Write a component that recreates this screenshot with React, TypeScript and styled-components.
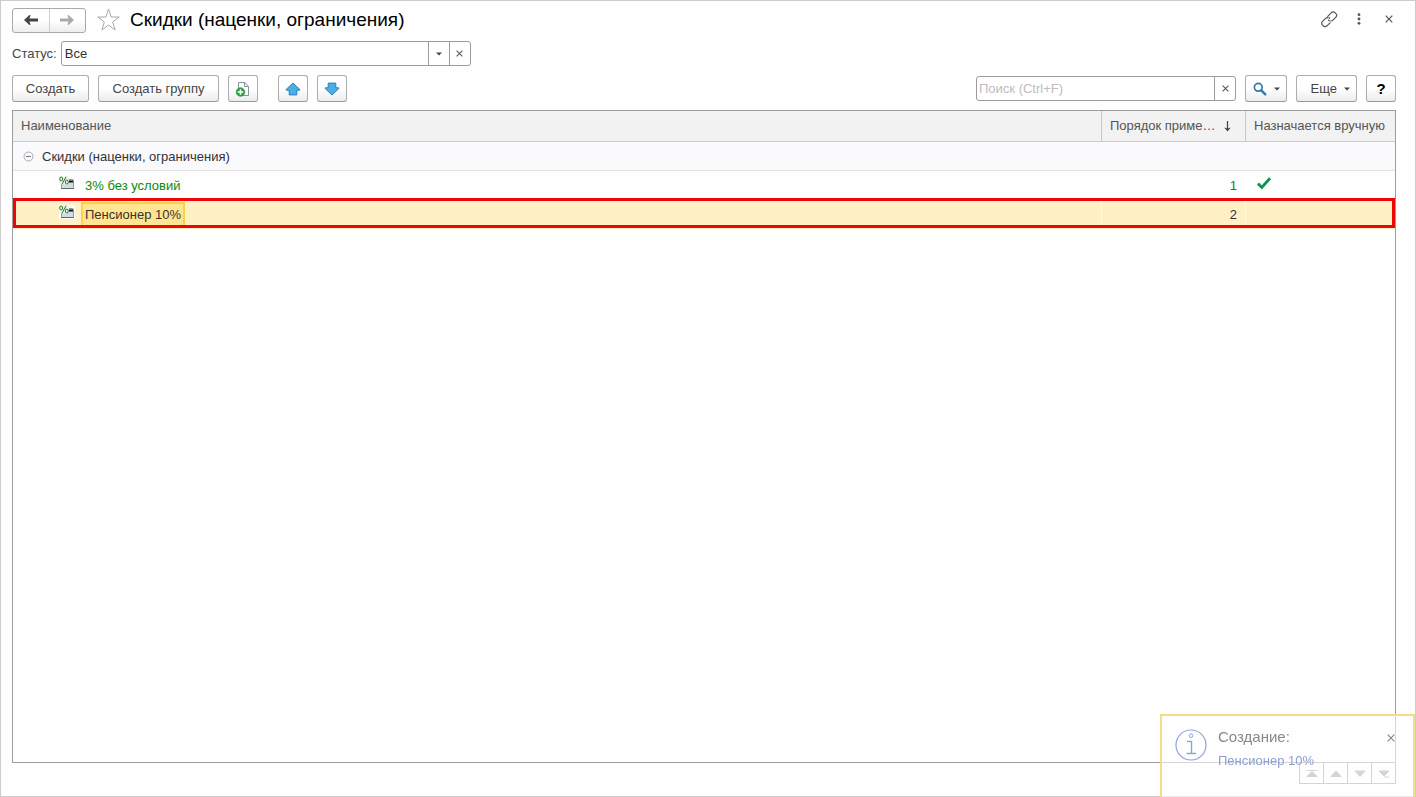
import React from 'react';
import styled, { createGlobalStyle, css } from 'styled-components';

const GlobalStyle = createGlobalStyle`
  *, *::before, *::after { box-sizing: border-box; }
  body {
    margin: 0;
    background: #fefefe;
    color: #444;
    font-family: "Liberation Sans", Arial, sans-serif;
    font-size: 13px;
    line-height: 16px;
  }
  button, input { font: inherit; color: inherit; margin: 0; }
  svg { display: block; flex: none; }
`;

const Window = styled.main`
  min-height: 100vh;
  display: flex;
  flex-direction: column;
  padding: 6px 19px 12px 11px;
  border: 1px solid #cdcdcd;
`;

const TitleBar = styled.header`
  display: flex;
  align-items: center;
  height: 26px;
`;

const History = styled.nav`
  display: flex;
  width: 74px;
  height: 25px;
  border: 1px solid #a9a9a9;
  border-radius: 3px;
  background: linear-gradient(#fff 50%, #ededed);
`;

const PlainButton = styled.button`
  display: flex;
  align-items: center;
  justify-content: center;
  padding: 0;
  border: 0;
  background: none;
`;

const HistoryButton = styled(PlainButton)`
  flex: 1;
  & + & { border-left: 1px solid #cfcfcf; }
`;

const StarButton = styled(PlainButton)`
  width: 24px;
  margin: 0 10px;
`;

const Title = styled.h1`
  flex: 1;
  margin: 0;
  color: #000;
  font-size: 19px;
  font-weight: 400;
  line-height: 24px;
`;

const WindowButtons = styled.div`
  display: flex;
  align-self: flex-start;
  gap: 12px;
  margin-right: -2px;
`;

const WindowButton = styled(PlainButton)`
  width: 18px;
  height: 24px;
`;

const Filter = styled.div`
  display: flex;
  align-items: center;
  gap: 4px;
  margin-top: 8px;
`;

const Field = styled.div<{ $width: number }>`
  display: flex;
  width: ${({ $width }) => $width}px;
  height: 25px;
  border: 1px solid #9c9c9c;
  border-radius: 3px;
  background: #fff;
`;

const FieldInput = styled.input`
  flex: 1;
  min-width: 0;
  padding: 0 3px;
  border: 0;
  outline: 0;
  background: none;
  color: #333;
  &::placeholder { color: #bdbdbd; opacity: 1; }
`;

const SearchInput = styled(FieldInput)`
  padding: 0 2px;
`;

const FieldButton = styled(PlainButton)`
  width: 21px;
  border-left: 1px solid #9c9c9c;
`;

const Toolbar = styled.div`
  display: flex;
  align-items: center;
  gap: 9px;
  margin-top: 9px;
`;

const ToolGroup = styled.div<{ $push?: boolean }>`
  display: flex;
  align-items: center;
  gap: 9px;
  ${({ $push }) => $push ? css`margin-left: auto;` : css`margin-right: 11px;`}
`;

const Button = styled.button<{ $width: number }>`
  display: flex;
  align-items: center;
  justify-content: center;
  gap: 7px;
  width: ${({ $width }) => $width}px;
  height: 27px;
  padding: 0;
  border: 1px solid #adadad;
  border-bottom-color: #999;
  border-radius: 3px;
  background: linear-gradient(#fff 50%, #ececec);
  color: #444;
  white-space: nowrap;
`;

const MoreButton = styled(Button)`
  justify-content: flex-end;
  padding-right: 6px;
`;

const HelpButton = styled(Button)`
  color: #000;
  font-size: 15px;
  font-weight: 700;
`;

const List = styled.section`
  flex: 1;
  margin-top: 8px;
  border: 1px solid #9c9c9c;
`;

const Table = styled.table`
  width: 100%;
  border-collapse: separate;
  border-spacing: 0;
  table-layout: fixed;
`;

const HeadCell = styled.th<{ $width?: number }>`
  ${({ $width }) => $width && css`width: ${$width}px;`}
  height: 31px;
  padding: 0 8px;
  border-bottom: 1px solid #c9c9c9;
  background: #f2f2f2;
  color: #555;
  font-weight: 400;
  text-align: left;
  white-space: nowrap;
  & + & { border-left: 1px solid #c9c9c9; }
`;

const SortLabel = styled.span`
  display: flex;
  align-items: center;
  justify-content: space-between;
  padding-right: 5px;
`;

const Row = styled.tr<{ $kind: 'group' | 'item' | 'current' }>`
  color: ${({ $kind }) => ($kind === 'item' ? '#0a8a0a' : '#333')};
  ${({ $kind }) => $kind === 'group' && css`
    background: #faf9fb;
    td { border-bottom: 1px solid #e2e2e2; }
  `}
  ${({ $kind }) => $kind === 'current' && css`
    position: relative;
    background: #fff0c6;
    td + td { border-left: 1px solid #fff8e4; }
    td:first-child::after {
      content: '';
      position: absolute;
      inset: -2px 0 1px;
      border: 3px solid #ec0606;
    }
  `}
`;

const Cell = styled.td<{ $align?: 'right' }>`
  height: 29px;
  padding: 0 8px;
  text-align: ${({ $align }) => $align ?? 'left'};
`;

const GroupName = styled.div`
  display: flex;
  align-items: center;
  gap: 8px;
  padding: 1px 0 0 2px;
`;

const ItemName = styled.div`
  display: flex;
  align-items: center;
  gap: 6px;
  padding-left: 38px;
`;

const RaisedIcon = styled.span`
  display: flex;
  padding-bottom: 5px;
`;

const CheckMark = styled(RaisedIcon)`
  padding-left: 4px;
`;

const NameText = styled.span<{ $active?: boolean }>`
  padding: 3px 2px;
  border: 2px solid transparent;
  ${({ $active }) => $active && css`
    border-color: #fbd34a;
    background: #ffe591;
  `}
`;

const Pager = styled.div`
  display: flex;
  align-self: flex-end;
  height: 21px;
  border: 1px solid #999;
  border-top: 0;
`;

const PagerButton = styled(PlainButton)`
  width: 24px;
  &:first-child { width: 23px; }
  & + & { border-left: 1px solid #999; }
`;

const Toast = styled.aside`
  position: fixed;
  right: 1px;
  bottom: 0;
  display: flex;
  align-items: flex-start;
  gap: 11px;
  width: 255px;
  height: 83px;
  padding: 13px 18px 0 13px;
  border: 2px solid #f6de7c;
  border-bottom: 0;
  background: rgba(254, 254, 254, 0.6);
`;

const ToastBody = styled.div`
  flex: 1;
  display: flex;
  flex-direction: column;
  gap: 8px;
`;

const ToastTitle = styled.strong`
  color: #888;
  font-size: 15px;
  font-weight: 400;
`;

const ToastLink = styled.a`
  color: #8a9fd4;
  text-decoration: none;
`;

const ToastClose = styled(PlainButton)`
  width: 9px;
  height: 18px;
`;

const Cross = ({ size = 7, color = '#555' }: { size?: number; color?: string }) => (
  <svg width={size} height={size} viewBox="0 0 8 8" fill="none" stroke={color} strokeWidth="1.2">
    <path d="M.7.7l6.6 6.6M7.3.7L.7 7.3" />
  </svg>
);

const Caret = () => (
  <svg width="6" height="4" viewBox="0 0 6 4" fill="#444"><path d="M0 .5h6L3 3.5z" /></svg>
);

const ArrowIcon = ({ forward }: { forward?: boolean }) => (
  <svg width="16" height="12" viewBox="0 0 16 12" fill={forward ? '#aaa' : '#444'}>
    <path
      transform={forward ? 'translate(16 0) scale(-1 1)' : undefined}
      d="M1 6L6.4 1 7.6 1.4 6.4 4.5H15v3H6.4l1.2 3.1-1.2.4z"
    />
  </svg>
);

const StarIcon = () => (
  <svg width="24" height="24" viewBox="0 0 24 24" fill="#fff" stroke="#aaa" strokeWidth="1">
    <path d="M12.5 1l2.6 8h8.1l-6.5 4.9 2.4 8-6.6-4.9-6.6 4.9 2.4-8L1.8 9h8.1z" />
  </svg>
);

const LinkIcon = () => (
  <svg width="17" height="17" viewBox="0 0 17 17" fill="none" stroke="#555" strokeWidth="1.2" strokeLinecap="round">
    <path d="M6.8 5.4l3.4-3.5a2.9 2.9 0 0 1 4.1 0l.4.4a2.9 2.9 0 0 1 0 4.1l-2.8 2.8a2.9 2.9 0 0 1-2.2.8" />
    <path d="M9 11.8l-2.8 2.9a2.9 2.9 0 0 1-4.1 0l-.4-.4a2.9 2.9 0 0 1 0-4.1l2.8-2.8a2.9 2.9 0 0 1 2.2-.8" />
    <path d="M7.9 6.6a2.9 2.9 0 0 1 .8.7M8.2 9.8a2.9 2.9 0 0 1-.8-.7" />
  </svg>
);

const DotsIcon = () => (
  <svg width="4" height="12" viewBox="0 0 4 12" fill="#555">
    <circle cx="2" cy="1.7" r="1.4" /><circle cx="2" cy="6" r="1.4" /><circle cx="2" cy="10.3" r="1.4" />
  </svg>
);

const AddDocumentIcon = () => (
  <svg width="16" height="16" viewBox="0 0 16 16">
    <path d="M3.5 1.5h6.3l3.7 3.7v9.3h-10z" fill="#fff" stroke="#8a949c" />
    <path d="M9.5 1.5v4h4" fill="none" stroke="#8a949c" />
    <circle cx="5.5" cy="11" r="4.3" fill="#27a844" stroke="#178a32" strokeWidth=".6" />
    <path d="M5.5 8.3v5.4M2.8 11h5.4" stroke="#fff" strokeWidth="1.5" />
  </svg>
);

const MoveIcon = ({ down }: { down?: boolean }) => (
  <svg width="16" height="14" viewBox="0 0 16 14" fill="#4aaee8" stroke="#2b7fb8" strokeLinejoin="round">
    <path
      transform={down ? 'translate(0 14) scale(1 -1)' : undefined}
      d="M8 1l6.8 6.4v.8H11.8V12.9H4.2V8.2h-3v-.8z"
    />
  </svg>
);

const SearchIcon = () => (
  <svg width="14" height="14" viewBox="0 0 14 14" fill="none" stroke="#3279ab">
    <circle cx="5.3" cy="5.3" r="3.9" strokeWidth="1.7" />
    <path d="M8.3 8.3l4 4" strokeWidth="2.4" strokeLinecap="round" />
  </svg>
);

const SortIcon = () => (
  <svg width="9" height="11" viewBox="0 0 9 11">
    <path d="M4.5 0v8" stroke="#444" strokeWidth="1.3" />
    <path d="M1.2 6.5l3.3 1 3.3-1L4.5 10.5z" fill="#444" />
  </svg>
);

const CollapseIcon = () => (
  <svg width="11" height="11" viewBox="0 0 11 11" fill="none" stroke="#aaa">
    <circle cx="5.5" cy="5.5" r="4.5" /><path d="M3 5.5h5" stroke="#777" />
  </svg>
);

const DiscountIcon = () => (
  <svg width="16" height="14" viewBox="0 0 16 14">
    <rect width="16" height="14" fill="#fdfdfa" />
    <rect x="2.5" y="3.5" width="12" height="9" rx="1" fill="#d3dce1" stroke="#8b979e" />
    <path d="M2 12.5h13" stroke="#5d6970" />
    <path d="M10 5.5h4" stroke="#111" strokeWidth="2" />
    <path d="M0 0h10v5.5L8.5 8.5H0z" fill="#f1f7ef" />
    <path d="M7 .8L3 8.4" stroke="#287332" strokeWidth="1" />
    <ellipse cx="2.2" cy="3" rx="1.5" ry="2" fill="none" stroke="#287332" />
    <ellipse cx="7.8" cy="6" rx="1.5" ry="2" fill="none" stroke="#287332" />
  </svg>
);

const CheckIcon = () => (
  <svg width="14" height="13" viewBox="0 0 14 13" fill="none" stroke="#0c9455" strokeWidth="2.8">
    <path d="M1 6.5l3.8 4L13 1.2" />
  </svg>
);

const InfoIcon = () => (
  <svg width="32" height="32" viewBox="0 0 32 32" fill="none" stroke="#8fa5d6" strokeWidth="1.2">
    <circle cx="16" cy="16" r="15" />
    <circle cx="16" cy="6.7" r="1.8" strokeWidth="1" />
    <path d="M12 12.5h4.5v12M11.5 24.5h9.5" strokeWidth="1.4" />
  </svg>
);

const pagerShapes = [
  { label: 'В начало', path: 'M1 1.5h10M6 2.5l5 5H1z' },
  { label: 'Вверх', path: 'M6 2l5 5.5H1z' },
  { label: 'Вниз', path: 'M6 7.5L1 2h10z' },
  { label: 'В конец', path: 'M6 7L1 2h10zM6 8h5' },
];

export default function App() {
  return (
    <Window>
      <GlobalStyle />
      <TitleBar>
        <History aria-label="История">
          <HistoryButton aria-label="Назад"><ArrowIcon /></HistoryButton>
          <HistoryButton aria-label="Вперед"><ArrowIcon forward /></HistoryButton>
        </History>
        <StarButton aria-label="В избранное"><StarIcon /></StarButton>
        <Title>Скидки (наценки, ограничения)</Title>
        <WindowButtons>
          <WindowButton aria-label="Ссылка"><LinkIcon /></WindowButton>
          <WindowButton aria-label="Меню"><DotsIcon /></WindowButton>
          <WindowButton aria-label="Закрыть"><Cross size={8} /></WindowButton>
        </WindowButtons>
      </TitleBar>

      <Filter>
        <label htmlFor="status">Статус:</label>
        <Field $width={410}>
          <FieldInput id="status" defaultValue="Все" />
          <FieldButton aria-label="Выбрать"><Caret /></FieldButton>
          <FieldButton aria-label="Очистить статус"><Cross /></FieldButton>
        </Field>
      </Filter>

      <Toolbar>
        <ToolGroup>
          <Button $width={77}>Создать</Button>
          <Button $width={121}>Создать группу</Button>
          <Button $width={30} aria-label="Скопировать"><AddDocumentIcon /></Button>
        </ToolGroup>
        <Button $width={30} aria-label="Переместить вверх"><MoveIcon /></Button>
        <Button $width={30} aria-label="Переместить вниз"><MoveIcon down /></Button>
        <ToolGroup $push>
          <Field $width={260}>
            <SearchInput aria-label="Поиск" placeholder="Поиск (Ctrl+F)" />
            <FieldButton aria-label="Очистить поиск"><Cross /></FieldButton>
          </Field>
          <Button $width={42} aria-label="Найти"><SearchIcon /><Caret /></Button>
          <MoreButton $width={61}>Еще<Caret /></MoreButton>
          <HelpButton $width={30}>?</HelpButton>
        </ToolGroup>
      </Toolbar>

      <List>
        <Table>
          <thead>
            <tr>
              <HeadCell>Наименование</HeadCell>
              <HeadCell $width={144}><SortLabel>Порядок приме…<SortIcon /></SortLabel></HeadCell>
              <HeadCell $width={150}>Назначается вручную</HeadCell>
            </tr>
          </thead>
          <tbody>
            <Row $kind="group">
              <Cell colSpan={3}><GroupName><CollapseIcon />Скидки (наценки, ограничения)</GroupName></Cell>
            </Row>
            <Row $kind="item">
              <Cell><ItemName><RaisedIcon><DiscountIcon /></RaisedIcon><NameText>3% без условий</NameText></ItemName></Cell>
              <Cell $align="right">1</Cell>
              <Cell><CheckMark><CheckIcon /></CheckMark></Cell>
            </Row>
            <Row $kind="current">
              <Cell><ItemName><RaisedIcon><DiscountIcon /></RaisedIcon><NameText $active>Пенсионер 10%</NameText></ItemName></Cell>
              <Cell $align="right">2</Cell>
              <Cell />
            </Row>
          </tbody>
        </Table>
      </List>

      <Pager>
        {pagerShapes.map(({ label, path }) => (
          <PagerButton key={label} aria-label={label}>
            <svg width="12" height="9" viewBox="0 0 12 9" fill="#999" stroke="#999" strokeWidth="1"><path d={path} /></svg>
          </PagerButton>
        ))}
      </Pager>

      <Toast>
        <InfoIcon />
        <ToastBody>
          <ToastTitle>Создание:</ToastTitle>
          <ToastLink href="#item">Пенсионер 10%</ToastLink>
        </ToastBody>
        <ToastClose aria-label="Закрыть уведомление"><Cross size={8} color="#888" /></ToastClose>
      </Toast>
    </Window>
  );
}
